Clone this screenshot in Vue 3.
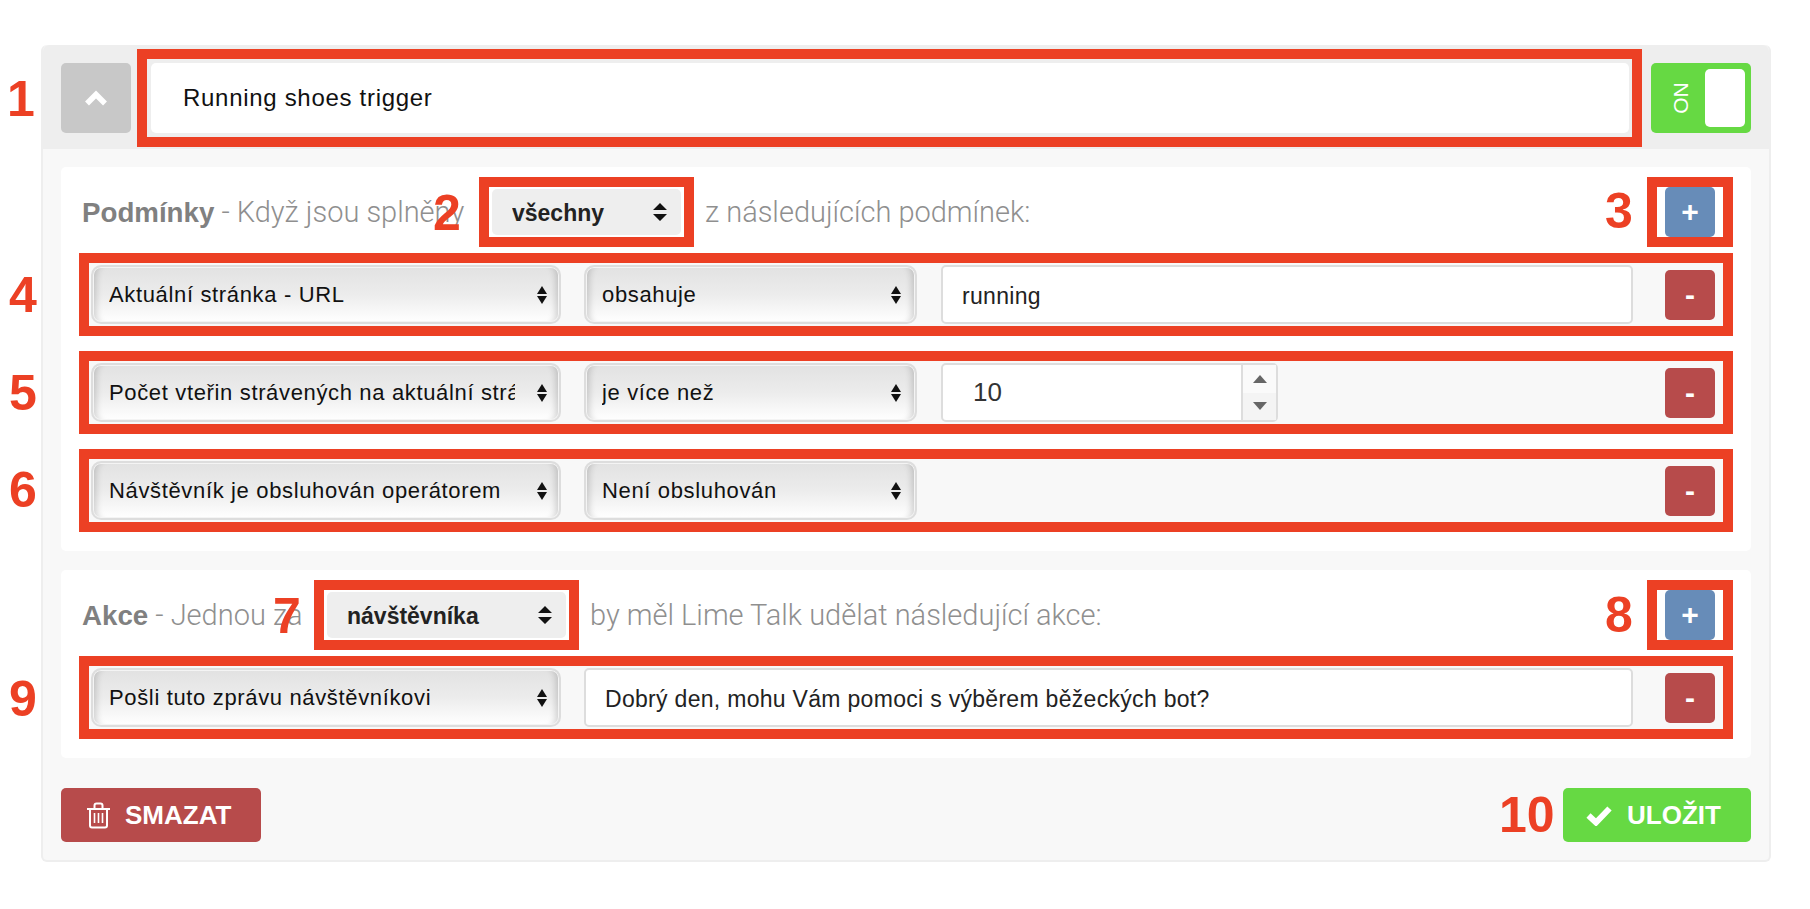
<script setup>
const conditions = [
  { id: 1, what: "Aktuální stránka - URL", how: "obsahuje", kind: "text", value: "running" },
  { id: 2, what: "Počet vteřin strávených na aktuální stránce", how: "je více než", kind: "number", value: "10" },
  { id: 3, what: "Návštěvník je obsluhován operátorem", how: "Není obsluhován", kind: "none" },
];

const markers = [1, 2, 3, 4, 5, 6, 7, 8, 9, 10];
</script>

<template>
  <div class="page">
    <div class="panel">
      <div class="panel-head">
        <button class="up-btn">
          <svg width="24" height="16" viewBox="0 0 24 16"><polyline points="3,13.5 12,4.5 21,13.5" fill="none" stroke="#fff" stroke-width="5.5" /></svg>
        </button>
        <div class="mark title-box">
          <input class="title-input" value="Running shoes trigger" />
        </div>
        <div class="toggle">
          <span class="toggle-label"><span>ON</span></span>
          <span class="toggle-knob"></span>
        </div>
      </div>

      <div class="panel-body">
        <section class="card">
          <div class="card-head">
            <div class="head-label label-wide"><b>Podmínky</b> - Když jsou splněny</div>
            <div class="mark head-select-box">
              <div class="head-select">
                <select><option>všechny</option></select>
                <svg class="arrows" width="14" height="18" viewBox="0 0 14 18"><path d="M7 0L14 7H0ZM7 18L0 11H14Z" /></svg>
              </div>
            </div>
            <div class="head-label after">z následujících podmínek:</div>
            <div class="mark add-box"><button class="square blue">+</button></div>
          </div>

          <div v-for="c in conditions" :key="c.id" class="mark row">
            <div class="sel wide">
              <select><option>{{ c.what }}</option></select>
              <svg class="arrows" width="10" height="18" viewBox="0 0 10 18"><path d="M5 0L10 8H0ZM5 18L0 10H10Z" /></svg>
            </div>
            <div class="sel narrow">
              <select><option>{{ c.how }}</option></select>
              <svg class="arrows" width="10" height="18" viewBox="0 0 10 18"><path d="M5 0L10 8H0ZM5 18L0 10H10Z" /></svg>
            </div>
            <input v-if="c.kind === 'text'" class="field grow" :value="c.value" />
            <div v-if="c.kind === 'number'" class="number">
              <input type="number" :value="c.value" />
              <div class="spin">
                <span class="tri-up"></span>
                <span class="tri-down"></span>
              </div>
            </div>
            <button class="square red">-</button>
          </div>
        </section>

        <section class="card">
          <div class="card-head">
            <div class="head-label label-short"><b>Akce</b> - Jednou za</div>
            <div class="mark head-select-box long">
              <div class="head-select">
                <select><option>návštěvníka</option></select>
                <svg class="arrows" width="14" height="18" viewBox="0 0 14 18"><path d="M7 0L14 7H0ZM7 18L0 11H14Z" /></svg>
              </div>
            </div>
            <div class="head-label after">by měl Lime Talk udělat následující akce:</div>
            <div class="mark add-box"><button class="square blue">+</button></div>
          </div>

          <div class="mark row">
            <div class="sel wide">
              <select><option>Pošli tuto zprávu návštěvníkovi</option></select>
              <svg class="arrows" width="10" height="18" viewBox="0 0 10 18"><path d="M5 0L10 8H0ZM5 18L0 10H10Z" /></svg>
            </div>
            <input class="field grow" value="Dobrý den, mohu Vám pomoci s výběrem běžeckých bot?" />
            <button class="square red">-</button>
          </div>
        </section>

        <div class="actions">
          <button class="action red">
            <svg width="25" height="27" viewBox="0 0 25 27" fill="none" stroke="#fff" stroke-width="2">
              <path d="M1 7h23M8.5 7V3.5Q8.5 1.5 10.5 1.5h4Q16.5 1.5 16.5 3.5V7M4 7v16.5Q4 25.5 6 25.5h13Q21 25.5 21 23.5V7" />
              <path d="M8.5 11v10M12.5 11v10M16.5 11v10" stroke-width="1.6" />
            </svg>
            SMAZAT
          </button>
          <button class="action green">
            <svg width="26" height="21" viewBox="0 0 26 21"><polyline points="2.5,10.5 10,17.5 23.5,3.5" fill="none" stroke="#fff" stroke-width="6" /></svg>
            ULOŽIT
          </button>
        </div>
      </div>
    </div>

    <span v-for="n in markers" :key="n" class="num" :class="'n' + n">{{ n }}</span>
  </div>
</template>

<style>
body {
  background: #fff;
}
</style>

<style scoped>
.page {
  position: relative;
  height: 909px;
  overflow: hidden;
  padding-top: 45px;
  box-sizing: border-box;
  font-family: "Liberation Sans", Arial, sans-serif;
}

button,
input,
select {
  font-family: inherit;
  border: 0;
  margin: 0;
  outline: 0;
}

.panel {
  width: 1730px;
  height: 817px;
  margin-left: 41px;
  box-sizing: border-box;
  background: #f8f8f8;
  border: 2px solid #eee;
  border-top: 0;
  border-radius: 6px;
}

.mark {
  border: 10px solid #ec4024;
  box-sizing: border-box;
}

/* head */
.panel-head {
  display: flex;
  align-items: center;
  height: 104px;
  padding: 2px 18px 0;
  box-sizing: border-box;
  background: #eee;
  border-radius: 6px 6px 0 0;
}

.up-btn {
  width: 70px;
  height: 70px;
  flex: none;
  background: #c8c8c8;
  border-radius: 5px;
  display: flex;
  align-items: center;
  justify-content: center;
}

.title-box {
  flex: 1;
  height: 98px;
  margin: 0 9px 0 6px;
  padding: 4px 3px 4px 4px;
}

.title-input {
  width: 100%;
  height: 70px;
  box-sizing: border-box;
  padding: 0 32px;
  background: #fff;
  border-radius: 5px;
  font-size: 24px;
  letter-spacing: 0.7px;
  color: #111;
}

.toggle {
  width: 100px;
  height: 70px;
  flex: none;
  display: flex;
  align-items: center;
  box-sizing: border-box;
  padding: 0 6px 0 5px;
  background: #66d943;
  border-radius: 5px;
}

.toggle-label {
  flex: 1;
  display: flex;
  justify-content: center;
  color: #fff;
  font-size: 21px;
}

.toggle-label span {
  transform: rotate(-90deg);
}

.toggle-knob {
  width: 40px;
  height: 58px;
  background: #fff;
  border-radius: 5px;
}

/* cards */
.panel-body {
  padding: 18px 18px 0;
}

.card {
  background: #fff;
  border-radius: 5px;
  padding: 10px 18px 19px;
  margin-bottom: 19px;
  display: flex;
  flex-direction: column;
  gap: 15px;
}

.card-head {
  display: flex;
  align-items: center;
  height: 70px;
  margin-bottom: -9px;
}

.head-label {
  font-family: Roboto, sans-serif;
  font-weight: 300;
  font-size: 29px;
  color: #8f8f8f;
  white-space: nowrap;
  padding-left: 3px;
  box-sizing: border-box;
}

.head-label b {
  font-family: "Liberation Sans", Arial, sans-serif;
  font-size: 27.7px;
  font-weight: 700;
  color: #808080;
}

.label-wide {
  width: 400px;
}

.label-short {
  width: 235px;
}

.after {
  margin-left: 11px;
  padding-left: 0;
}

.head-select-box {
  width: 215px;
  height: 70px;
  padding: 2px 3px;
}

.head-select-box.long {
  width: 265px;
}

.head-select {
  position: relative;
  height: 46px;
}

.head-select select {
  width: 100%;
  height: 100%;
  appearance: none;
  background: #eee;
  border-radius: 5px;
  padding: 2px 20px 0;
  font-size: 23px;
  font-weight: 700;
  color: #222;
}

.arrows {
  position: absolute;
  top: 50%;
  margin-top: -9px;
  right: 14px;
  fill: #111;
  pointer-events: none;
}

.add-box {
  margin-left: auto;
  width: 86px;
  height: 70px;
  padding: 0 8px;
}

.square {
  width: 50px;
  height: 50px;
  flex: none;
  border-radius: 5px;
  color: #fff;
  font-size: 30px;
  font-weight: 700;
  line-height: 1;
  padding: 0;
}

.blue {
  background: #678cb8;
}

.red {
  background: #b74b4b;
}

.row {
  display: flex;
  align-items: center;
  gap: 24px;
  height: 83px;
  padding: 0 8px 0 2px;
  background: #f8f8f8;
}

.sel {
  position: relative;
  height: 59px;
  flex: none;
}

.wide {
  width: 470px;
  margin-right: -1px;
}

.narrow {
  width: 333px;
}

.sel select {
  width: 100%;
  height: 100%;
  appearance: none;
  box-sizing: border-box;
  border: 2px solid #ddd;
  border-radius: 10px;
  padding: 0 44px 0 16px;
  background: linear-gradient(#e2e2e2, #ececec 50%, #fff);
  box-shadow: inset 0 0 0 1px #f4f4f4, inset 9px 0 7px -6px rgba(0, 0, 0, 0.18), inset -9px 0 7px -6px rgba(0, 0, 0, 0.18);
  font-size: 22px;
  letter-spacing: 0.65px;
  color: #111;
}

.sel .arrows {
  right: 14px;
}

.narrow .arrows {
  right: 16px;
}

.field,
.number {
  height: 59px;
  box-sizing: border-box;
  border: 2px solid #ddd;
  border-radius: 5px;
  background: #fff;
}

.field {
  padding: 4px 19px 0;
  font-size: 23px;
  letter-spacing: 0.3px;
  color: #222;
}

.grow {
  flex: 1;
  min-width: 0;
  margin-right: 8px;
}

.number {
  width: 337px;
  display: flex;
}

.number input {
  flex: 1;
  min-width: 0;
  padding: 0 30px;
  background: transparent;
  font-size: 26px;
  color: #333;
  appearance: textfield;
}

.spin {
  width: 33px;
  border-left: 2px solid #ddd;
  background: linear-gradient(#fafafa 50%, #f4f4f4 50%);
  display: flex;
  flex-direction: column;
  align-items: center;
  justify-content: center;
  gap: 19px;
}

.tri-up,
.tri-down {
  width: 0;
  height: 0;
  border-left: 7.5px solid transparent;
  border-right: 7.5px solid transparent;
}

.tri-up {
  border-bottom: 8px solid #666;
}

.tri-down {
  border-top: 8px solid #666;
}

.row .square {
  margin-left: auto;
}

/* footer */
.actions {
  display: flex;
  justify-content: space-between;
  margin-top: 30px;
}

.action {
  height: 54px;
  display: flex;
  align-items: center;
  border-radius: 5px;
  color: #fff;
  font-size: 26px;
  font-weight: 700;
}

.action.red {
  width: 200px;
  padding: 0 0 0 25px;
  gap: 14px;
}

.action.green {
  width: 188px;
  padding: 0 0 0 23px;
  gap: 15px;
  background: #66d943;
}

/* annotation numbers */
.num {
  position: absolute;
  font-size: 50px;
  font-weight: 700;
  line-height: 1;
  color: #ec4024;
}

.n1 { left: 7px; top: 74px; }
.n2 { left: 433px; top: 188px; }
.n3 { left: 1605px; top: 186px; }
.n4 { left: 9px; top: 270px; }
.n5 { left: 9px; top: 368px; }
.n6 { left: 9px; top: 465px; }
.n7 { left: 273px; top: 591px; }
.n8 { left: 1605px; top: 590px; }
.n9 { left: 9px; top: 674px; }
.n10 { left: 1499px; top: 790px; }
</style>
